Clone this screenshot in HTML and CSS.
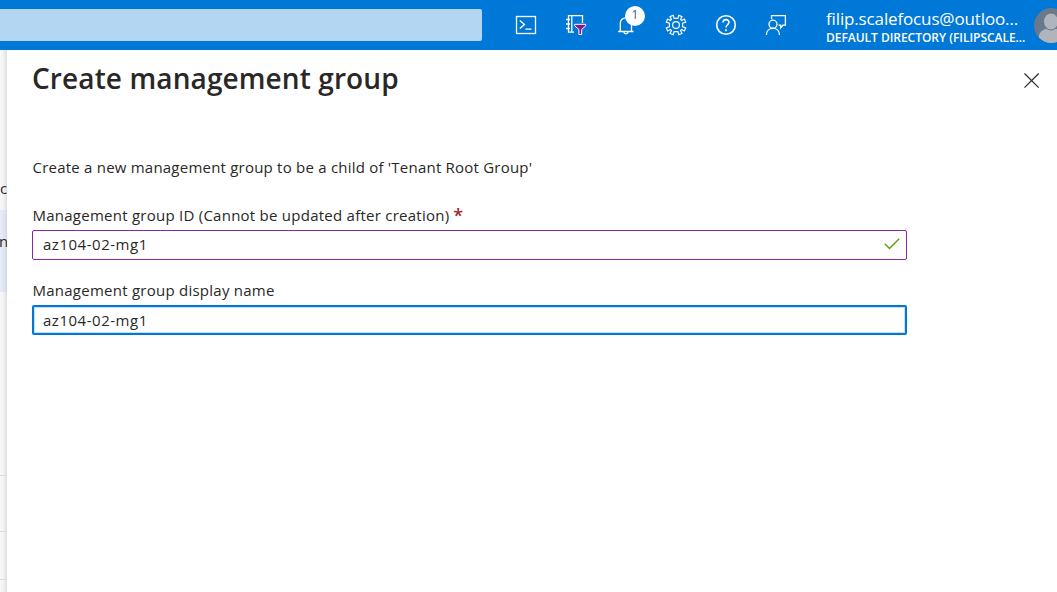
FILE: index.html
```
<!DOCTYPE html>
<html lang="en">
<head>
<meta charset="utf-8">
<title>Create management group</title>
<link rel="stylesheet" href="styles.css">
</head>
<body>
<header class="topbar">
  <div class="search"></div>
  <nav class="tools">
    <svg class="icon" viewBox="0 0 22 22"><rect x="1.5" y="2.5" width="19" height="17"/><path d="M4.8 6.5 9.5 10.5 4.8 14.5M10.5 15.2h6"/></svg>
    <svg class="icon" viewBox="0 0 22 22"><path d="M9 18.2H3.5V1.7h14V9M6.8 1.7v16.5M1 5.5h4M1 10h4M1 14.5h4"/><path class="funnel" d="M9.7 10.3h11v1.6l-4 3.6v5h-2.8v-5l-4.2-3.6z"/></svg>
    <span class="bell"><svg class="icon" viewBox="0 0 22 22"><path d="M3.2 17.5h15.3M5.3 17V9.5C5.3 6 7.8 3.8 11 3.8s5.5 2.2 5.5 5.7V17M8.8 18c.3 2.4 4 2.4 4.3 0"/></svg><span class="badge">1</span></span>
    <svg class="icon gear" viewBox="0 0 22 22"><path d="M9.1 4.4 8.2 1.3 5 2.6 6.5 5.5 5.5 6.5 2.6 5 1.3 8.2l3.1.9v3.8l-3.1.9L2.6 17l2.9-1.5 1 1L5 19.4l3.2 1.3.9-3.1h3.8l.9 3.1 3.2-1.3-1.5-2.9 1-1 2.9 1.5 1.3-3.2-3.1-.9V9.1l3.1-.9L19.4 5l-2.9 1.5-1-1L17 2.6l-3.2-1.3-.9 3.1z"/><circle cx="11" cy="11" r="3.4"/></svg>
    <svg class="icon help" viewBox="0 0 22 22"><circle cx="11" cy="11" r="9.3"/><path d="M8 8.6c0-4 6-3.9 6-.3 0 2.4-3 2.5-3 5.2M11 15.2v2"/></svg>
    <svg class="icon" viewBox="0 0 22 22"><path d="M6.5 5V1.6h13.9v9.6H18l-2.4 2.6v-2.6H13.5"/><circle cx="8" cy="10.2" r="4"/><path d="M1.4 21c0-4 2.8-6.6 6.6-6.6s6.5 2.6 6.5 6.6"/></svg>
  </nav>
  <div class="account">
    <div class="email">filip.scalefocus@outloo...</div>
    <div class="directory">DEFAULT DIRECTORY (FILIPSCALE...</div>
  </div>
  <svg class="avatar" viewBox="0 0 35 35"><defs><clipPath id="face"><circle cx="17.5" cy="17.5" r="17.5"/></clipPath></defs><g clip-path="url(#face)"><path fill="#69798b" d="M0 0h35v35H0z"/><rect x="4.5" y="20.8" width="26" height="20" rx="9" fill="#b0b5bb"/><ellipse cx="17" cy="13.5" rx="7.5" ry="8.5" fill="#b0b5bb" stroke="#69798b"/></g></svg>
</header>
<main class="workspace">
  <aside class="under">
    <div class="under-head">c</div>
    <div class="under-row">n</div>
    <div class="line gap-a"></div>
    <div class="line gap-b"></div>
    <div class="line gap-c"></div>
  </aside>
  <section class="panel">
    <div class="panel-head">
      <h1 class="title">Create management group</h1>
      <svg class="close" viewBox="0 0 16 16"><path d="M.5.5l14.2 14.2M14.7.5.5 14.7"/></svg>
    </div>
    <p class="intro">Create a new management group to be a child of 'Tenant Root Group'</p>
    <div class="label"><span class="label-id">Management group ID (Cannot be updated after creation)</span><span class="required">*</span></div>
    <div class="field valid"><span class="value">az104-02-mg1</span><svg class="check" viewBox="0 0 16 12"><path d="M.8 5.8 5.5 10.5 15.2.8"/></svg></div>
    <div class="label second"><span class="label-name">Management group display name</span></div>
    <div class="field focused"><span class="value">az104-02-mg1</span></div>
  </section>
</main>
</body>
</html>
```
FILE: styles.css
```
* { box-sizing: border-box; }
body {
  margin: 0;
  width: 1057px;
  height: 592px;
  overflow: hidden;
  background: #fff;
  color: #292827;
  font: 15px/20px "Open Sans", "Noto Sans", sans-serif;
}
.topbar {
  display: flex;
  align-items: center;
  height: 50px;
  background: #0078d7;
  color: #fff;
  overflow: hidden;
}
.search {
  flex: none;
  width: 482px;
  height: 32px;
  border-radius: 0 2px 2px 0;
  background: #b3d6f2;
}
.tools {
  flex: none;
  display: flex;
  gap: 28px;
  margin-left: 33px;
}
.icon {
  display: block;
  width: 22px;
  height: 22px;
  fill: none;
  stroke: #fff;
  stroke-width: 1.3;
}
.gear { stroke-width: 1.15; }
.help { stroke-width: 1.6; }
.funnel { fill: #881798; stroke-width: 1; }
.bell { position: relative; }
.badge {
  position: absolute;
  left: 10px;
  top: -8px;
  width: 20px;
  height: 20px;
  border-radius: 50%;
  background: #fff;
  color: #3c5a9a;
  font-size: 12px;
  line-height: 18px;
  text-align: center;
}
.account {
  flex: none;
  width: 208px;
  margin-left: 39px;
  padding-top: 4px;
  white-space: nowrap;
}
.email { font-size: 17px; line-height: 20px; letter-spacing: -0.14px; }
.directory { font-size: 12px; line-height: 17px; font-weight: 600; letter-spacing: -0.03px; }
.avatar { flex: none; width: 35px; height: 35px; }
.workspace { display: flex; height: 542px; }
.under {
  flex: none;
  width: 7px;
  overflow: hidden;
  background: #f7f7f7;
  box-shadow: inset -5px 0 5px -4px #d0d0d0;
}
.under-head { height: 160px; padding-top: 128px; }
.under-row {
  height: 82px;
  padding-top: 21px;
  background: #e5ebf7;
  text-indent: -1px;
  box-shadow: inset -5px 0 5px -4px #c8cdd8;
}
.line { height: 1px; background: #dedede; }
.gap-a { margin-top: 183px; }
.gap-b { margin-top: 55px; }
.gap-c { margin-top: 47px; }
.panel { flex: 1; padding: 0 17px 0 25px; background: #fff; }
.panel-head {
  display: flex;
  justify-content: space-between;
  height: 107px;
}
.title {
  margin: 9px 0 0;
  font-size: 28px;
  line-height: 38px;
  font-weight: 600;
  letter-spacing: 0.11px;
  white-space: nowrap;
}
.close {
  width: 16px;
  height: 16px;
  margin-top: 23px;
  fill: none;
  stroke: #292827;
  stroke-width: 1.2;
}
.intro { margin: 0 0 28px; padding-left: 0.5px; letter-spacing: 0.22px; }
.label { display: flex; height: 20px; padding-left: 0.5px; letter-spacing: 0.25px; white-space: nowrap; }
.second { margin-top: 20px; }
.required {
  margin-left: 4px;
  color: #a4262c;
  font-size: 18px;
  font-weight: 600;
}
.field {
  display: flex;
  align-items: center;
  justify-content: space-between;
  width: 875px;
  height: 30px;
  margin-top: 5px;
  padding: 0 6px 2px 10px;
  border: 1px solid #8928a5;
  border-radius: 2px;
}
.value { letter-spacing: 0.52px; }
.focused {
  padding: 0 9px 0 9px;
  border: 2px solid #0078d4;
  box-shadow: inset 0 0 0 1px #c7e2f6;
}
.check {
  width: 16px;
  height: 12px;
  fill: none;
  stroke: #57a300;
  stroke-width: 1.4;
}
```
